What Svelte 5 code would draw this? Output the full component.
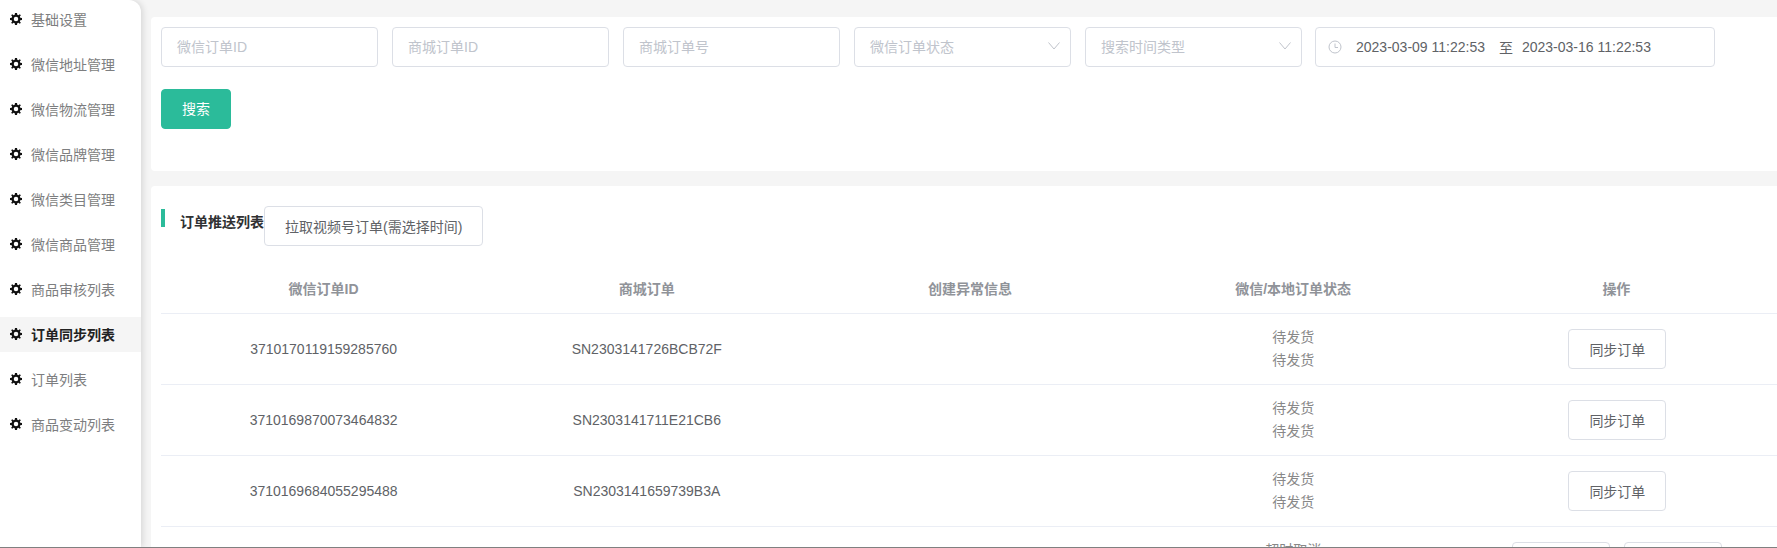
<script>
  const menu = ['基础设置', '微信地址管理', '微信物流管理', '微信品牌管理', '微信类目管理', '微信商品管理', '商品审核列表', '订单同步列表', '订单列表', '商品变动列表'];
  const rows = [
    { id: '3710170119159285760', sn: 'SN2303141726BCB72F', status: '待发货', actions: ['同步订单'] },
    { id: '3710169870073464832', sn: 'SN2303141711E21CB6', status: '待发货', actions: ['同步订单'] },
    { id: '3710169684055295488', sn: 'SN2303141659739B3A', status: '待发货', actions: ['同步订单'] },
    { id: '', sn: '', status: '超时取消', actions: ['同步订单', '同步订单'] }
  ];
</script>

<div class="page">
  <aside class="side">
    <ul>
      {#each menu as item}
        <li class:on={item === '订单同步列表'}>
          <svg viewBox="0 0 24 24" width="12" height="12" aria-hidden="true">
            <path fill="currentColor" fill-rule="evenodd" d="M10 0h4l.6 3.4 2.2.9L19.600 2.300l2.100 2.100-2 2.800.9 2.200 3.400.6v4l-3.400.6-.9 2.200 2 2.800-2.100 2.100-2.800-2-2.200.9L14 24h-4l-.6-3.400-2.200-.9-2.800 2-2.100-2.100 2-2.800-.9-2.200L0 14v-4l3.400-.6.9-2.200-2-2.800 2.100-2.100 2.800 2 2.200-.9zM12 7.500a4.500 4.500 0 1 0 0 9 4.500 4.500 0 0 0 0-9z" />
          </svg>
          <span>{item}</span>
        </li>
      {/each}
    </ul>
  </aside>

  <main class="main">
    <section class="card search">
      <div class="fields">
        <div class="field ph">微信订单ID</div>
        <div class="field ph">商城订单ID</div>
        <div class="field ph">商城订单号</div>
        <div class="field ph sel">微信订单状态
          <svg viewBox="0 0 12 8" width="12" height="8"><path d="M.5.5 6 7 11.500.5" fill="none" stroke="#c0c4cc" /></svg>
        </div>
        <div class="field ph sel">搜索时间类型
          <svg viewBox="0 0 12 8" width="12" height="8"><path d="M.5.5 6 7 11.500.5" fill="none" stroke="#c0c4cc" /></svg>
        </div>
        <div class="field range">
          <svg viewBox="0 0 14 14" width="14" height="14"><circle cx="7" cy="7" r="6" fill="none" stroke="#c0c4cc" /><path d="M7 3.500V7.500h3" fill="none" stroke="#c0c4cc" /></svg>
          <span>2023-03-09 11:22:53</span>
          <span class="to">至</span>
          <span>2023-03-16 11:22:53</span>
        </div>
      </div>
      <button class="primary" type="button">搜索</button>
    </section>

    <section class="card list">
      <div class="head">
        <i class="mark"></i>
        <h2>订单推送列表</h2>
        <button class="btn pull" type="button">拉取视频号订单(需选择时间)</button>
      </div>

      <table>
        <thead>
          <tr>
            <th>微信订单ID</th>
            <th>商城订单</th>
            <th>创建异常信息</th>
            <th>微信/本地订单状态</th>
            <th>操作</th>
          </tr>
        </thead>
        <tbody>
          {#each rows as r}
            <tr>
              <td>{r.id}</td>
              <td>{r.sn}</td>
              <td></td>
              <td class="status"><div>{r.status}</div><div>{r.status}</div></td>
              <td>
                <div class="ops">
                  {#each r.actions as a}
                    <button class="btn" type="button">{a}</button>
                  {/each}
                </div>
              </td>
            </tr>
          {/each}
        </tbody>
      </table>
    </section>
  </main>
</div>

<style>
  :global(body) {
    margin: 0;
    background: #f5f5f5;
  }
  .page {
    display: flex;
    box-sizing: border-box;
    height: 548px;
    overflow: hidden;
    border-bottom: 1px solid #808080;
    font-family: "Liberation Sans", "Noto Sans CJK SC", sans-serif;
    font-size: 14px;
    color: #606266;
  }
  .side {
    flex: none;
    width: 141px;
    margin-right: 10px;
    background: #fff;
    border-top-right-radius: 12px;
    box-shadow: 2px 0 6px rgba(0, 0, 0, 0.12);
  }
  ul {
    list-style: none;
    margin: 0;
    padding: 2px 0 0;
  }
  li {
    box-sizing: border-box;
    display: flex;
    align-items: center;
    gap: 9px;
    height: 35px;
    margin-bottom: 10px;
    padding: 0 0 2px 10px;
    color: #7d7e80;
  }
  li svg {
    color: #111;
  }
  li.on {
    background: #f5f5f5;
    color: #222;
    font-weight: 700;
  }
  .main {
    flex: 1;
    min-width: 0;
    padding-top: 17px;
  }
  .card {
    background: #fff;
    border-radius: 4px 0 0 4px;
    padding: 10px 0 10px 10px;
  }
  .search {
    height: 154px;
    box-sizing: border-box;
    margin-bottom: 15px;
  }
  .fields {
    display: flex;
    gap: 14px;
  }
  .field {
    box-sizing: border-box;
    flex: none;
    width: 217px;
    height: 40px;
    display: flex;
    align-items: center;
    border: 1px solid #dcdfe6;
    border-radius: 4px;
    padding: 0 15px;
  }
  .ph {
    color: #c0c4cc;
    padding-bottom: 2px;
  }
  .sel {
    justify-content: space-between;
    padding-right: 10px;
  }
  .range {
    width: 400px;
    margin-left: -1px;
    padding: 0 0 0 12px;
    color: #606266;
  }
  .range svg { margin-right: 14px; }
  .to { margin: 0 9px 0 14px; }
  .primary {
    display: block;
    width: 70px;
    height: 40px;
    margin-top: 22px;
    padding: 0 0 2px;
    border: 1px solid #2bbb9a;
    border-radius: 4px;
    background: #2bbb9a;
    color: #fff;
    font: inherit;
  }
  .list {
    padding-top: 20px;
    height: 400px;
  }
  .head {
    display: flex;
    height: 40px;
  }
  .mark {
    width: 4px;
    height: 18px;
    margin: 3px 15px 0 0;
    background: #2bbb9a;
  }
  h2 {
    margin: 0;
    font-size: 14px;
    line-height: 32px;
    color: #303133;
    font-weight: 700;
    white-space: nowrap;
  }
  .btn {
    box-sizing: border-box;
    flex: none;
    height: 40px;
    padding: 0 20px;
    border: 1px solid #dcdfe6;
    border-radius: 4px;
    background: #fff;
    color: #606266;
    font: inherit;
  }
  table {
    width: 100%;
    border-collapse: separate;
    border-spacing: 0;
    table-layout: fixed;
    margin-top: 19px;
  }
  th, td {
    box-sizing: border-box;
    text-align: center;
    border-bottom: 1px solid #ebeef5;
    padding: 0 0 0 2px;
  }
  th {
    height: 49px;
    padding-bottom: 2px;
    color: #909399;
    font-weight: 700;
  }
  td { height: 71px; }
  .status { color: #888; line-height: 23px; }
  .ops {
    display: flex;
    justify-content: center;
    gap: 14px;
    padding-left: 2px;
  }
</style>
